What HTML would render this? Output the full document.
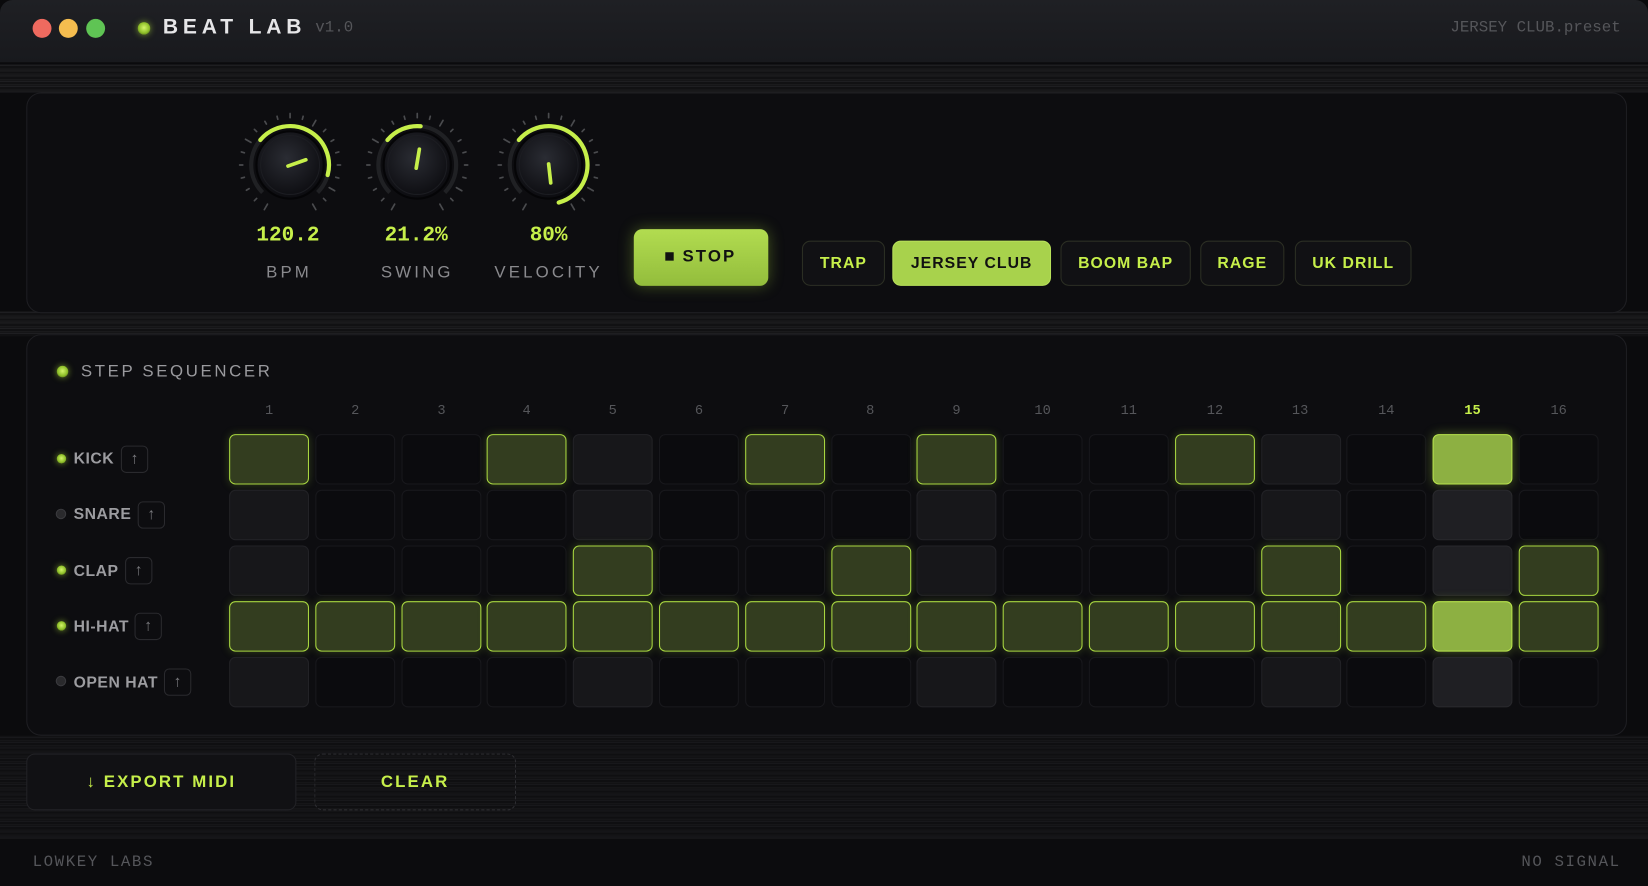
<!DOCTYPE html>
<html><head><meta charset="utf-8"><style>
*{box-sizing:border-box;margin:0;padding:0}
html,body{width:1648px;height:886px;overflow:hidden;background:#0a0a0c}
#w{position:absolute;left:0;top:0;width:1568px;height:843px;transform:scale(1.05102);transform-origin:0 0;background:#0b0b0d;font-family:"Liberation Sans",sans-serif;overflow:hidden;border-radius:12px 12px 0 0}
.abs{position:absolute}
.tb{left:0;top:0;width:1568px;height:60px;background:linear-gradient(#1f2024,#18191d);border-bottom:1px solid #0e0e10}
.dot{width:18px;height:18px;border-radius:50%;top:18px}
.led{border-radius:50%;background:radial-gradient(circle at 50% 45%,#d4f56a,#8fc02a 55%,#3a4a12);box-shadow:0 0 6px rgba(180,230,60,.6)}
.ledoff{border-radius:50%;background:#2a2a2d;border:1px solid #3a3a3e}
.strip{left:0;width:1568px;background:repeating-linear-gradient(180deg,#151517 0 1px,#1e1e21 1px 2px,#111113 2px 4px,#1a1a1c 4px 5px)}
.panel{left:25px;width:1523px;border-radius:14px;background:#0d0d10;border:1px solid #1e1e22}
.val{font-family:"Liberation Mono",monospace;font-weight:bold;color:#c6ef4a;font-size:20px;width:120px;text-align:center;top:213px}
.lab{color:#8a8a8e;font-size:16px;letter-spacing:3px;width:140px;text-align:center;top:251px}
.pb{top:229px;height:43px;border-radius:8px;border:1px solid #2c2f24;background:#111114;color:#c6ef4a;font-weight:bold;font-size:15px;letter-spacing:1px;text-align:center;line-height:41px}
.num{font-family:"Liberation Mono",monospace;font-size:13px;color:#55565a;width:76px;text-align:center;top:383px}
.c{width:76px;height:48px;border-radius:6px;border:1px solid #18181c;background:#0b0b0e}
.g{background:#17171a;border-color:#222226}
.p{background:#1f1f23;border-color:#28282c}
.a{background:#333d1f;border:1.5px solid #a8d640;box-shadow:0 0 8px rgba(160,210,60,.25)}
.b{background:#8db042;border:1.5px solid #b8e44c;box-shadow:0 0 10px rgba(180,230,70,.35)}
.rl{color:#9c9ca0;font-weight:bold;font-size:15px;letter-spacing:.5px}
.ar{width:26px;height:26px;border:1px solid #2a2a2e;border-radius:5px;color:#77777b;font-size:15px;text-align:center;line-height:24px}
</style></head><body><div id="w">
<svg width="0" height="0" style="position:absolute"><defs>
<g id="tk" stroke="#4a4b4e" stroke-width="1.6" stroke-linecap="round">
<line x1="50" y1="1" x2="50" y2="7" transform="rotate(-150 50 50)"/><line x1="50" y1="2" x2="50" y2="5" transform="rotate(-135 50 50)"/><line x1="50" y1="2" x2="50" y2="5" transform="rotate(-120 50 50)"/><line x1="50" y1="2" x2="50" y2="5" transform="rotate(-105 50 50)"/><line x1="50" y1="2" x2="50" y2="5" transform="rotate(-90 50 50)"/><line x1="50" y1="2" x2="50" y2="5" transform="rotate(-75 50 50)"/><line x1="50" y1="1" x2="50" y2="7" transform="rotate(-60 50 50)"/><line x1="50" y1="2" x2="50" y2="5" transform="rotate(-45 50 50)"/><line x1="50" y1="2" x2="50" y2="5" transform="rotate(-30 50 50)"/><line x1="50" y1="2" x2="50" y2="5" transform="rotate(-15 50 50)"/><line x1="50" y1="1" x2="50" y2="5" transform="rotate(0 50 50)"/><line x1="50" y1="2" x2="50" y2="5" transform="rotate(15 50 50)"/><line x1="50" y1="1" x2="50" y2="7" transform="rotate(30 50 50)"/><line x1="50" y1="2" x2="50" y2="5" transform="rotate(45 50 50)"/><line x1="50" y1="2" x2="50" y2="5" transform="rotate(60 50 50)"/><line x1="50" y1="2" x2="50" y2="5" transform="rotate(75 50 50)"/><line x1="50" y1="2" x2="50" y2="5" transform="rotate(90 50 50)"/><line x1="50" y1="2" x2="50" y2="5" transform="rotate(105 50 50)"/><line x1="50" y1="1" x2="50" y2="7" transform="rotate(120 50 50)"/><line x1="50" y1="2" x2="50" y2="5" transform="rotate(135 50 50)"/><line x1="50" y1="1" x2="50" y2="7" transform="rotate(150 50 50)"/></g>
<radialGradient id="kb" cx="45%" cy="40%" r="60%"><stop offset="0" stop-color="#2a2c33"/><stop offset="1" stop-color="#0c0c10"/></radialGradient>
<g id="body"><path d="M23.84 76.16 A37 37 0 1 1 76.16 76.16" fill="none" stroke="#202124" stroke-width="4"/><circle cx="50" cy="50" r="32" fill="url(#kb)" stroke="#050507" stroke-width="2"/><circle cx="50" cy="50" r="28" fill="none" stroke="#1c1d22" stroke-width="1"/></g>
</defs></svg>
<div class="abs tb"></div>
<div class="abs dot" style="left:31px;background:#ee6a5f"></div>
<div class="abs dot" style="left:56px;background:#f5bd4f"></div>
<div class="abs dot" style="left:82px;background:#5fc454"></div>
<div class="abs led" style="left:131px;top:21px;width:12px;height:12px"></div>
<div class="abs" style="left:155px;top:15px;color:#e6e6e8;font-weight:bold;font-size:20px;letter-spacing:4.6px">BEAT LAB</div>
<div class="abs" style="left:300px;top:18px;color:#55565a;font-family:'Liberation Mono',monospace;font-size:15px">v1.0</div>
<div class="abs" style="right:26px;top:18px;color:#55565a;font-family:'Liberation Mono',monospace;font-size:15px">JERSEY CLUB.preset</div>
<div class="abs strip" style="top:61px;height:27px"></div>
<div class="abs strip" style="top:296px;height:24px"></div>
<div class="abs strip" style="top:700px;height:97px;opacity:.7"></div>
<div class="abs panel" style="top:88px;height:210px"></div>
<svg class="abs" style="left:221px;top:102px" width="110" height="110" viewBox="-5 -5 110 110"><use href="#tk"/><use href="#body"/><path d="M21.66 26.21 A37 37 0 0 1 85.74 59.58" fill="none" stroke="#c6ef4a" stroke-width="4" stroke-linecap="round"/><line x1="48" y1="51" x2="65" y2="45" stroke="#c6ef4a" stroke-width="3.5" stroke-linecap="round"/></svg>
<svg class="abs" style="left:342px;top:102px" width="110" height="110" viewBox="-5 -5 110 110"><use href="#tk"/><use href="#body"/><path d="M21.66 26.21 A37 37 0 0 1 53.22 13.14" fill="none" stroke="#c6ef4a" stroke-width="4" stroke-linecap="round"/><line x1="49" y1="53" x2="52" y2="35" stroke="#c6ef4a" stroke-width="3.5" stroke-linecap="round"/></svg>
<svg class="abs" style="left:467px;top:102px" width="110" height="110" viewBox="-5 -5 110 110"><use href="#tk"/><use href="#body"/><path d="M21.66 26.21 A37 37 0 1 1 59.58 85.74" fill="none" stroke="#c6ef4a" stroke-width="4" stroke-linecap="round"/><line x1="50" y1="49" x2="52" y2="67" stroke="#c6ef4a" stroke-width="3.5" stroke-linecap="round"/></svg>
<div class="abs val" style="left:214px">120.2</div>
<div class="abs val" style="left:336px">21.2%</div>
<div class="abs val" style="left:462px">80%</div>
<div class="abs lab" style="left:205px">BPM</div>
<div class="abs lab" style="left:327px">SWING</div>
<div class="abs lab" style="left:452px">VELOCITY</div>
<div class="abs" style="left:603px;top:218px;width:128px;height:54px;border-radius:8px;background:linear-gradient(#b2dc50,#93bd3c);box-shadow:0 0 14px rgba(170,220,60,.35);color:#111;font-weight:bold;font-size:16px;letter-spacing:2px;text-align:center;line-height:54px"><span style="display:inline-block;width:8px;height:8px;background:#111;margin-right:8px;vertical-align:1px"></span>STOP</div>
<div class="abs pb" style="left:763px;width:79px">TRAP</div>
<div class="abs pb" style="left:849px;width:151px;background:#a8d24c;border-color:#b7e05a;color:#111">JERSEY CLUB</div>
<div class="abs pb" style="left:1009px;width:124px">BOOM BAP</div>
<div class="abs pb" style="left:1142px;width:80px">RAGE</div>
<div class="abs pb" style="left:1232px;width:111px">UK DRILL</div>
<div class="abs panel" style="top:318px;height:382px"></div>
<div class="abs led" style="left:54px;top:348px;width:11px;height:11px"></div>
<div class="abs" style="left:77px;top:345px;color:#9a9a9e;font-size:16px;letter-spacing:2.5px">STEP SEQUENCER</div>
<div class="abs led" style="left:54px;top:432px;width:9px;height:9px"></div><div class="abs rl" style="left:70px;top:428px">KICK</div><div class="abs ar" style="left:115px;top:424px">↑</div>
<div class="abs ledoff" style="left:53px;top:484px;width:10px;height:10px"></div><div class="abs rl" style="left:70px;top:481px">SNARE</div><div class="abs ar" style="left:131px;top:477px">↑</div>
<div class="abs led" style="left:54px;top:538px;width:9px;height:9px"></div><div class="abs rl" style="left:70px;top:535px">CLAP</div><div class="abs ar" style="left:119px;top:530px">↑</div>
<div class="abs led" style="left:54px;top:591px;width:9px;height:9px"></div><div class="abs rl" style="left:70px;top:588px">HI-HAT</div><div class="abs ar" style="left:128px;top:583px">↑</div>
<div class="abs ledoff" style="left:53px;top:643px;width:10px;height:10px"></div><div class="abs rl" style="left:70px;top:641px">OPEN HAT</div><div class="abs ar" style="left:156px;top:636px">↑</div>
<div class="abs" style="left:25px;top:717px;width:257px;height:54px;border-radius:8px;border:1px solid #222226;background:#111114;color:#c6ef4a;font-weight:bold;font-size:16px;letter-spacing:2px;text-align:center;line-height:54px">↓ EXPORT MIDI</div>
<div class="abs" style="left:299px;top:717px;width:192px;height:54px;border-radius:8px;border:1px dashed #2e2e32;color:#c6ef4a;font-weight:bold;font-size:16px;letter-spacing:2px;text-align:center;line-height:54px">CLEAR</div>
<div class="abs" style="left:0;top:797px;width:1568px;height:46px;background:#0c0c0e;border-top:1px solid #1a1a1d"></div>
<div class="abs" style="left:31px;top:812px;color:#55565a;font-family:'Liberation Mono',monospace;font-size:15px;letter-spacing:1.5px">LOWKEY LABS</div>
<div class="abs" style="right:26px;top:812px;color:#55565a;font-family:'Liberation Mono',monospace;font-size:15px;letter-spacing:1.5px">NO SIGNAL</div>
<div class="abs num" style="left:218px">1</div><div class="abs num" style="left:300px">2</div><div class="abs num" style="left:382px">3</div><div class="abs num" style="left:463px">4</div><div class="abs num" style="left:545px">5</div><div class="abs num" style="left:627px">6</div><div class="abs num" style="left:709px">7</div><div class="abs num" style="left:790px">8</div><div class="abs num" style="left:872px">9</div><div class="abs num" style="left:954px">10</div><div class="abs num" style="left:1036px">11</div><div class="abs num" style="left:1118px">12</div><div class="abs num" style="left:1199px">13</div><div class="abs num" style="left:1281px">14</div><div class="abs num" style="left:1363px;color:#c6ef4a;font-weight:bold">15</div><div class="abs num" style="left:1445px">16</div>
<div style="position:absolute;left:218px;top:413px;display:grid;grid-template-columns:repeat(16,76px);column-gap:5.8px;row-gap:5px">
<div class="c a"></div><div class="c"></div><div class="c"></div><div class="c a"></div><div class="c g"></div><div class="c"></div><div class="c a"></div><div class="c"></div><div class="c a"></div><div class="c"></div><div class="c"></div><div class="c a"></div><div class="c g"></div><div class="c"></div><div class="c b"></div><div class="c"></div>
<div class="c g"></div><div class="c"></div><div class="c"></div><div class="c"></div><div class="c g"></div><div class="c"></div><div class="c"></div><div class="c"></div><div class="c g"></div><div class="c"></div><div class="c"></div><div class="c"></div><div class="c g"></div><div class="c"></div><div class="c p"></div><div class="c"></div>
<div class="c g"></div><div class="c"></div><div class="c"></div><div class="c"></div><div class="c a"></div><div class="c"></div><div class="c"></div><div class="c a"></div><div class="c g"></div><div class="c"></div><div class="c"></div><div class="c"></div><div class="c a"></div><div class="c"></div><div class="c p"></div><div class="c a"></div>
<div class="c a"></div><div class="c a"></div><div class="c a"></div><div class="c a"></div><div class="c a"></div><div class="c a"></div><div class="c a"></div><div class="c a"></div><div class="c a"></div><div class="c a"></div><div class="c a"></div><div class="c a"></div><div class="c a"></div><div class="c a"></div><div class="c b"></div><div class="c a"></div>
<div class="c g"></div><div class="c"></div><div class="c"></div><div class="c"></div><div class="c g"></div><div class="c"></div><div class="c"></div><div class="c"></div><div class="c g"></div><div class="c"></div><div class="c"></div><div class="c"></div><div class="c g"></div><div class="c"></div><div class="c p"></div><div class="c"></div>
</div>
</div></body></html>
